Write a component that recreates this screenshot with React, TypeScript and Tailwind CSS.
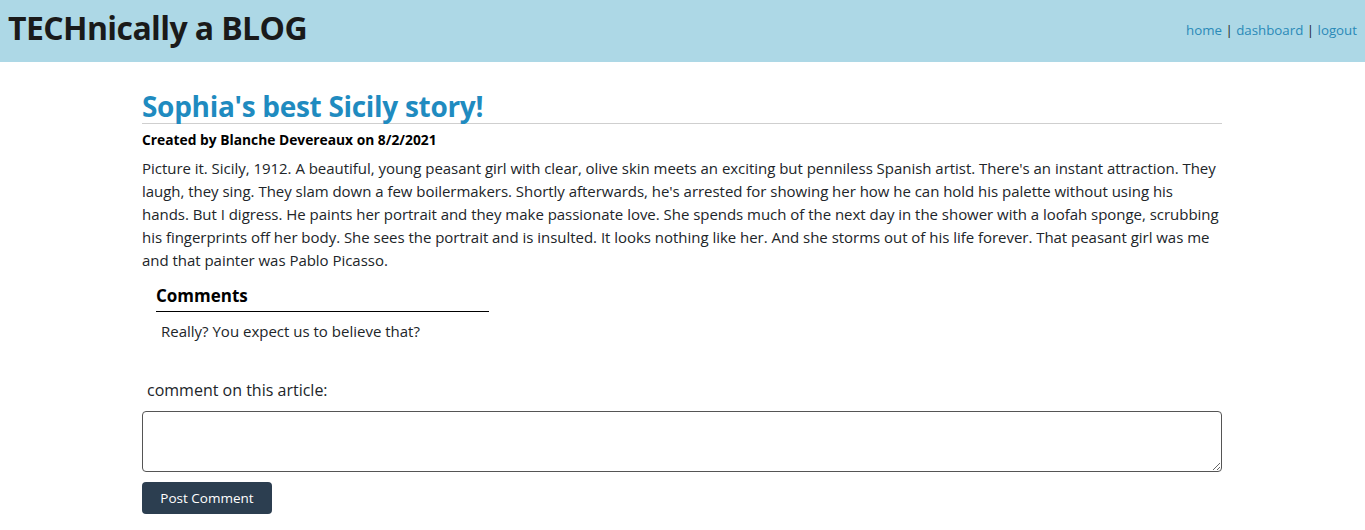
const App = () => {
  return (
    <div className="min-h-[530px] bg-white text-[#212529] font-['Open_Sans',sans-serif]">
      <header className="h-[62px] bg-[#add8e6] flex items-center justify-between px-2">
        <h1 className="text-[32px] font-bold text-[#1a1a1a] tracking-[-0.6px] pb-[6px]">TECHnically a BLOG</h1>
        <nav className="text-[13.3px] text-[#212529]">
          <a className="text-[#2a8ab8]">home</a> | <a className="text-[#2a8ab8]">dashboard</a> | <a className="text-[#2a8ab8]">logout</a>
        </nav>
      </header>
      <main className="w-[1080px] ml-[142px] pt-[27px]">
        <h2 className="text-[28px] leading-[34px] font-bold text-[#1f8bc0] border-b border-[#cfcfcf] tracking-[-0.3px]">Sophia's best Sicily story!</h2>
        <p className="text-[13.8px] font-bold text-black mt-[7px] leading-[18px]">Created by Blanche Devereaux on 8/2/2021</p>
        <p className="text-[15px] leading-[23px] mt-[8px] tracking-[-0.03px]">
          Picture it. Sicily, 1912. A beautiful, young peasant girl with clear, olive skin meets an exciting but penniless Spanish artist. There's an instant attraction. They<br />
          laugh, they sing. They slam down a few boilermakers. Shortly afterwards, he's arrested for showing her how he can hold his palette without using his<br />
          hands. But I digress. He paints her portrait and they make passionate love. She spends much of the next day in the shower with a loofah sponge, scrubbing<br />
          his fingerprints off her body. She sees the portrait and is insulted. It looks nothing like her. And she storms out of his life forever. That peasant girl was me<br />
          and that painter was Pablo Picasso.
        </p>
        <section className="ml-[14px] w-[333px] mt-[12px]">
          <h3 className="text-[17px] font-bold text-black leading-[24px] pb-[3px] border-b border-black">Comments</h3>
          <p className="text-[15px] leading-[22px] ml-[5px] mt-[8px]">Really? You expect us to believe that?</p>
        </section>
        <form className="mt-[36px]" onSubmit={(e) => e.preventDefault()}>
          <label className="block text-[16px] ml-[5px] leading-[24px]">comment on this article:</label>
          <textarea className="block w-full h-[61px] mt-[9px] border border-[#555] rounded-[4px]"></textarea>
          <button className="mt-[10px] w-[130px] h-[32px] bg-[#2c3e50] text-white text-[13.5px] rounded-[4px]">Post Comment</button>
        </form>
      </main>
    </div>
  );
};

export default App;
